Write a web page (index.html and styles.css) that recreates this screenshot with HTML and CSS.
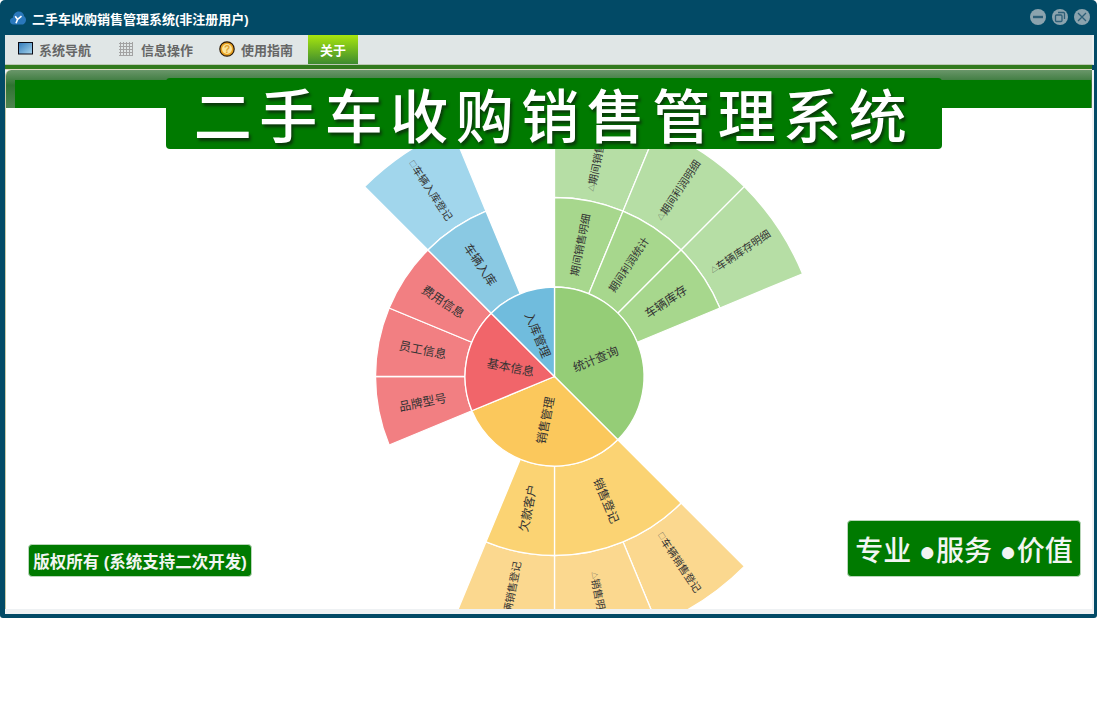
FILE: index.html
```html
<!DOCTYPE html>
<html lang="zh-CN">
<head>
<meta charset="utf-8">
<title>二手车收购销售管理系统</title>
<link rel="stylesheet" href="styles.css">
</head>
<body>
<div class="window">
  <header class="titlebar">
    <svg class="logo" viewBox="0 0 16 14" width="16" height="14"><path class="logo-cloud" d="M3.500 13.500C1.500 13.500 0 12 0 10 0 8.300 1.200 7 2.800 6.700 3.400 3 5.800.5 8.700.5c2.800 0 5 2 5.500 4.800 1.100.7 1.800 2 1.800 3.400 0 2.600-1.800 4.800-4 4.800z"/><path class="logo-y" d="M5.200 5.200l2.400 3.200L6 12.200M11.500 5.200L7.600 8.400"/></svg>
    <span class="app-title">二手车收购销售管理系统(非注册用户)</span>
    <div class="win-btns">
      <svg class="win-btn" viewBox="0 0 16 16" width="16" height="16"><circle class="wb-bg" cx="8" cy="8" r="8"/><path class="wb-ln wb-thick" d="M3 8h10"/></svg>
      <svg class="win-btn" viewBox="0 0 16 16" width="16" height="16"><circle class="wb-bg" cx="8" cy="8" r="8"/><rect class="wb-ln" x="3.500" y="6" width="6.500" height="6.500" rx="1"/><path class="wb-ln" d="M6 3.500h5.500a1 1 0 0 1 1 1V10"/></svg>
      <svg class="win-btn" viewBox="0 0 16 16" width="16" height="16"><circle class="wb-bg" cx="8" cy="8" r="8"/><path class="wb-ln" d="M4 4l8 8M12 4l-8 8"/></svg>
    </div>
  </header>
  <nav class="menubar">
    <a class="menu-item item-nav">
      <svg class="ico" viewBox="0 0 15 13" width="15" height="13"><defs><linearGradient id="scr" x1="0" y1="0" x2="1" y2="1"><stop offset="0" stop-color="#2f78b8"/><stop offset="1" stop-color="#a9d6ee"/></linearGradient></defs><rect x=".5" y=".5" width="14" height="11.500" fill="url(#scr)" stroke="#0a0a14"/></svg>
      系统导航</a>
    <a class="menu-item item-info">
      <svg class="ico" viewBox="0 0 14 14" width="14" height="14"><path class="grid-ln" d="M1.500 0v14M4.500 0v14M7.500 0v14M10.500 0v14M13.500 0v14M0 1.500h14M0 4.500h14M0 7.500h14M0 10.500h14M0 13.500h14"/></svg>
      信息操作</a>
    <a class="menu-item item-help">
      <svg class="ico" viewBox="0 0 16 16" width="16" height="16"><circle class="coin" cx="8" cy="8" r="7.200"/><circle class="coin-in" cx="8" cy="8" r="5"/><text class="coin-q" x="8" y="11.500">?</text></svg>
      使用指南</a>
    <a class="menu-item item-about">关于</a>
  </nav>
  <div class="rule"></div>
  <main class="panel">
    <div class="panel-head"><div class="panel-bar"></div></div>
    <div class="canvas">
      <svg class="sunburst" width="1086" height="501" viewBox="6 108 1086 501">
        <defs>
          <path id="r2" d="M0 -89.500A89.500 89.500 0 0 1 34.250 -82.690L68.500 -165.370A179 179 0 0 0 0 -179Z"/>
          <path id="r2w" d="M0 -89.500A89.500 89.500 0 0 1 63.290 -63.290L126.570 -126.570A179 179 0 0 0 0 -179Z"/>
          <path id="r3" d="M0 -179A179 179 0 0 1 68.500 -165.370L102.750 -248.060A268.500 268.500 0 0 0 0 -268.500Z"/>
        </defs>
        <g transform="translate(554.5 376.5)">
          <g class="seg">
            <use href="#r3" class="g3"/>
            <use href="#r3" class="g3" transform="rotate(22.5)"/>
            <use href="#r3" class="g3" transform="rotate(45)"/>
            <use href="#r3" class="o3" transform="rotate(135)"/>
            <use href="#r3" class="o3" transform="rotate(157.5)"/>
            <use href="#r3" class="o3" transform="rotate(180)"/>
            <use href="#r3" class="b3" transform="rotate(315)"/>
            <use href="#r2" class="g2"/>
            <use href="#r2" class="g2" transform="rotate(22.5)"/>
            <use href="#r2" class="g2" transform="rotate(45)"/>
            <use href="#r2w" class="o2" transform="rotate(135)"/>
            <use href="#r2" class="o2" transform="rotate(180)"/>
            <use href="#r2" class="r2" transform="rotate(247.5)"/>
            <use href="#r2" class="r2" transform="rotate(270)"/>
            <use href="#r2" class="r2" transform="rotate(292.5)"/>
            <use href="#r2" class="b2" transform="rotate(315)"/>
            <path class="g1" d="M0 0L0 -89.500A89.500 89.500 0 0 1 63.290 63.290Z"/>
            <path class="o1" d="M0 0L63.290 63.290A89.500 89.500 0 0 1 -82.690 34.250Z"/>
            <path class="r1" d="M0 0L-82.690 34.250A89.500 89.500 0 0 1 -63.290 -63.290Z"/>
            <path class="b1" d="M0 0L-63.290 -63.290A89.500 89.500 0 0 1 0 -89.500Z"/>
          </g>
          <g class="lbl lbl-lg">
            <text dy="-1.5" transform="rotate(67.5) translate(0 -44.75) rotate(-90)">统计查询</text>
            <text dy="-1.5" transform="rotate(191.25) translate(0 -44.75) rotate(90)">销售管理</text>
            <text dy="-1.5" transform="rotate(281.25) translate(0 -44.75) rotate(90)">基本信息</text>
            <text dy="-1.5" transform="rotate(337.5) translate(0 -44.75) rotate(90)">入库管理</text>
            <text dy="-1.5" transform="rotate(56.25) translate(0 -134.25) rotate(-90)">车辆库存</text>
            <text dy="-1.5" transform="rotate(157.5) translate(0 -134.25) rotate(-90)">销售登记</text>
            <text dy="-1.5" transform="rotate(191.25) translate(0 -134.25) rotate(90)">欠款客户</text>
            <text dy="-1.5" transform="rotate(258.75) translate(0 -134.25) rotate(90)">品牌型号</text>
            <text dy="-1.5" transform="rotate(281.25) translate(0 -134.25) rotate(90)">员工信息</text>
            <text dy="-1.5" transform="rotate(303.75) translate(0 -134.25) rotate(90)">费用信息</text>
            <text dy="-1.5" transform="rotate(326.25) translate(0 -134.25) rotate(90)">车辆入库</text>
          </g>
          <g class="lbl lbl-sm">
            <text dy="-1" transform="rotate(11.25) translate(0 -134.25) rotate(-90)">期间销售明细</text>
            <text dy="-1" transform="rotate(33.75) translate(0 -134.25) rotate(-90)">期间利润统计</text>
            <text dy="-1" transform="rotate(11.25) translate(0 -223.75) rotate(-90)"><tspan class="mark">△</tspan>期间销售明细</text>
            <text dy="-1" transform="rotate(33.75) translate(0 -223.75) rotate(-90)"><tspan class="mark">△</tspan>期间利润明细</text>
            <text dy="-1" transform="rotate(56.25) translate(0 -223.75) rotate(-90)"><tspan class="mark">△</tspan>车辆库存明细</text>
            <text dy="-1" transform="rotate(146.25) translate(0 -223.75) rotate(-90)"><tspan class="mark">□</tspan>车辆销售登记</text>
            <text dy="-1" transform="rotate(168.75) translate(0 -223.75) rotate(-90)"><tspan class="mark">△</tspan>销售明细</text>
            <text dy="-1" transform="rotate(191.25) translate(0 -223.75) rotate(90)"><tspan class="mark">□</tspan>车辆销售登记</text>
            <text dy="-1" transform="rotate(326.25) translate(0 -223.75) rotate(90)"><tspan class="mark">□</tspan>车辆入库登记</text>
          </g>
        </g>
      </svg>
      <div class="badge badge-copy">版权所有 (系统支持二次开发)</div>
      <div class="badge badge-slogan">专业 ●服务 ●价值</div>
    </div>
    <div class="panel-foot"></div>
    <h1 class="banner">二手车收购销售管理系统</h1>
  </main>
</div>
</body>
</html>
```
FILE: styles.css
```css
* { box-sizing: border-box; }
html, body { margin: 0; background: #fff; }
body { font-family: "Liberation Sans", "Noto Sans CJK SC", sans-serif; }

.window {
  width: 1097px;
  height: 618px;
  background: #024a66;
  border-radius: 5px 5px 3px 3px;
  padding: 0 3px 4px 5px;
  display: flex;
  flex-direction: column;
}

.titlebar {
  height: 35px;
  flex: none;
  display: flex;
  align-items: center;
  padding: 1px 4px 0 5px;
}
.logo { margin-right: 6px; }
.logo-cloud { fill: #2a78bc; }
.logo-y { fill: none; stroke: #fff; stroke-width: 1.6; }
.app-title { color: #fff; font-size: 13px; font-weight: 700; }
.win-btns { margin-left: auto; display: flex; gap: 6px; margin-top: -2px; }
.win-btn { display: block; }
.wb-bg { fill: #8ba3ae; }
.wb-ln { fill: none; stroke: #2d5f78; stroke-width: 1.3; }
.wb-thick { stroke-width: 2.4; }

.menubar {
  height: 30px;
  flex: none;
  display: flex;
  align-items: stretch;
  background: #e0e6e6;
  border-right: 2px solid #e9eeee;
  border-bottom: 1px solid #bcc8b4;
}
.menu-item {
  display: flex;
  align-items: center;
  color: #666;
  font-size: 13px;
  font-weight: 700;
}
.ico { flex: none; }
.item-nav { margin-left: 13px; width: 101px; }
.item-nav .ico { margin-right: 6px; margin-top: -3px; }
.item-info { width: 100px; }
.item-info .ico { margin-right: 8px; margin-top: -1px; }
.item-help { width: 89px; }
.item-help .ico { margin-right: 6px; margin-top: -1px; }
.item-about {
  width: 50px;
  justify-content: center;
  color: #fff;
  background: linear-gradient(#a8e60e, #3d8b2f);
}
.grid-ln { fill: none; stroke: #a3a3a3; stroke-width: 1; }
.coin { fill: #e8a020; stroke: #2a1a08; stroke-width: 1.2; }
.coin-in { fill: #fbe49a; }
.coin-q { font-size: 10px; font-weight: 700; fill: #e0a030; text-anchor: middle; }

.rule {
  height: 5px;
  flex: none;
  background: #327a1e;
  border-bottom: 1px solid #d9d9c2;
  margin-right: 2px;
}

.panel {
  position: relative;
  flex: 1;
  min-height: 0;
  display: flex;
  flex-direction: column;
  background: #eef1f3;
}
.panel-head {
  height: 38px;
  flex: none;
  padding: 10px 1px 0 9px;
  margin-right: 2px;
  border-radius: 6px 0 0 0;
  border-left: 1px solid #c9c9a6;
  background: linear-gradient(#6a966a, #2f7331 40%, #4f8451);
}
.panel-bar { height: 28px; background: #007a00; }

.canvas {
  position: relative;
  height: 501px;
  flex: none;
  background: #fff;
  margin: 0 2px 0 0;
  border-left: 1px solid #c9c9a6;
  overflow: hidden;
}
.panel-foot { flex: 1; }

.sunburst { position: absolute; left: 0; top: 0; display: block; font-family: "Noto Sans CJK SC", sans-serif; }
.seg { stroke: #fff; stroke-width: 1.3; }
.g1 { fill: #95cd77; }
.g2 { fill: #a7d78d; }
.g3 { fill: #b6dea5; }
.o1 { fill: #fbc85c; }
.o2 { fill: #fbd373; }
.o3 { fill: #fbd88f; }
.r1 { fill: #f1656a; }
.r2 { fill: #f27f82; }
.b1 { fill: #70bcdd; }
.b2 { fill: #8ac9e3; }
.b3 { fill: #a1d6ec; }
.lbl { fill: #333; text-anchor: middle; dominant-baseline: central; }
.lbl-lg { font-size: 12px; }
.lbl-sm { font-size: 10.5px; }
.mark { font-size: 7px; fill: #555; }

.banner {
  position: absolute;
  left: 161px;
  top: 8px;
  width: 776px;
  height: 71px;
  margin: 0;
  background: #007a00;
  border-radius: 4px;
  color: #fff;
  font-family: "Noto Sans CJK SC", sans-serif;
  font-size: 58px;
  font-weight: 500;
  letter-spacing: 7.5px;
  line-height: 71px;
  text-align: center;
  white-space: nowrap;
  text-shadow: 2px 3px 3px #0a3a0a;
}

.badge {
  position: absolute;
  background: #007a00;
  color: #f2f5f2;
  border: 1px solid #b9d6b9;
  border-radius: 4px;
  white-space: nowrap;
  display: flex;
  align-items: center;
  justify-content: center;
}
.badge-copy {
  left: 22px;
  top: 436px;
  width: 224px;
  height: 33px;
  font-size: 16.5px;
  font-weight: 700;
}
.badge-slogan {
  left: 841px;
  top: 412px;
  width: 234px;
  height: 57px;
  font-size: 28px;
  font-weight: 500;
}
```
